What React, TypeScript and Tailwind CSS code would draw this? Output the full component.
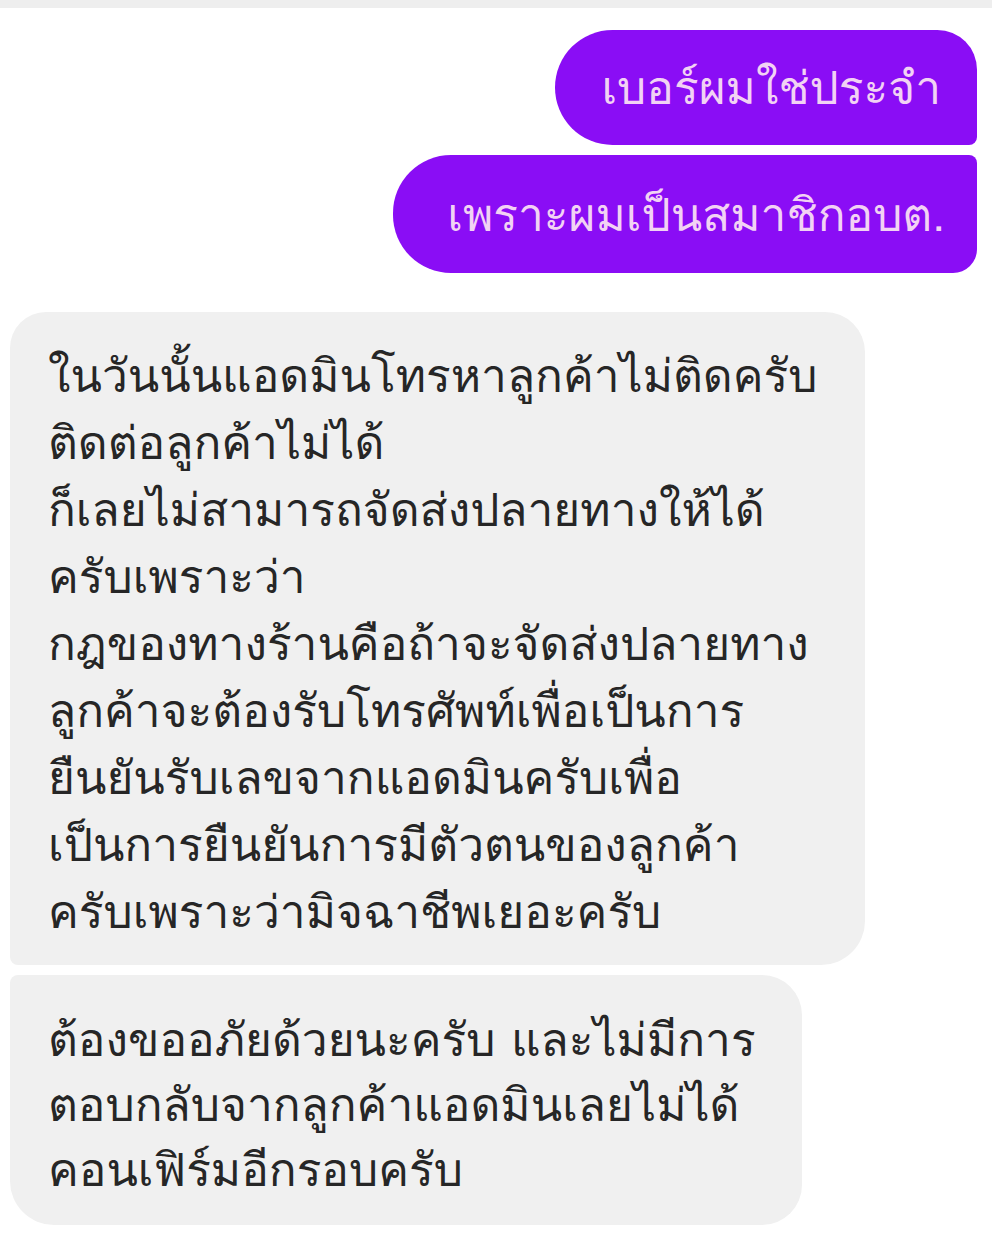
const incoming1 = [
  "ในวันนั้นแอดมินโทรหาลูกค้าไม่ติดครับ",
  "ติดต่อลูกค้าไม่ได้",
  "ก็เลยไม่สามารถจัดส่งปลายทางให้ได้",
  "ครับเพราะว่า",
  "กฎของทางร้านคือถ้าจะจัดส่งปลายทาง",
  "ลูกค้าจะต้องรับโทรศัพท์เพื่อเป็นการ",
  "ยืนยันรับเลขจากแอดมินครับเพื่อ",
  "เป็นการยืนยันการมีตัวตนของลูกค้า",
  "ครับเพราะว่ามิจฉาชีพเยอะครับ",
];

const incoming2 = [
  "ต้องขออภัยด้วยนะครับ และไม่มีการ",
  "ตอบกลับจากลูกค้าแอดมินเลยไม่ได้",
  "คอนเฟิร์มอีกรอบครับ",
];

export default function App() {
  return (
    <div className="w-[992px] h-[1251px] overflow-hidden bg-white font-['Loma','Noto_Sans_Thai_Looped','DejaVu_Sans',sans-serif]">
      <div className="h-[8px] bg-[#eeeeee]" />
      <div className="flex flex-col items-end pr-[15px] pt-[22px] gap-[10px]">
        <div className="h-[115px] w-[422px] pr-[36px] flex items-center justify-end rounded-l-[58px] rounded-tr-[40px] rounded-br-[8px] bg-[#8a0df5] text-[#f2d2f4] text-[46px]">
          เบอร์ผมใช่ประจำ
        </div>
        <div className="h-[118px] w-[584px] pr-[32px] flex items-center justify-end rounded-l-[58px] rounded-tr-[8px] rounded-br-[24px] bg-[#8a0df5] text-[#f2d2f4] text-[46px]">
          เพราะผมเป็นสมาชิกอบต.
        </div>
      </div>
      <div className="flex flex-col items-start pl-[10px] pt-[39px] gap-[10px]">
        <div className="w-[855px] h-[653px] pl-[38px] pt-[30px] rounded-tl-[36px] rounded-tr-[40px] rounded-bl-[8px] rounded-br-[44px] bg-[#f0f0f0] text-[#262626] text-[46px] leading-[67px]">
          {incoming1.map((l) => (
            <div key={l}>{l}</div>
          ))}
        </div>
        <div className="w-[792px] h-[250px] pl-[38px] pt-[32px] rounded-tl-[8px] rounded-tr-[40px] rounded-bl-[44px] rounded-br-[40px] bg-[#f0f0f0] text-[#262626] text-[46px] leading-[65px]">
          {incoming2.map((l) => (
            <div key={l}>{l}</div>
          ))}
        </div>
      </div>
    </div>
  );
}
